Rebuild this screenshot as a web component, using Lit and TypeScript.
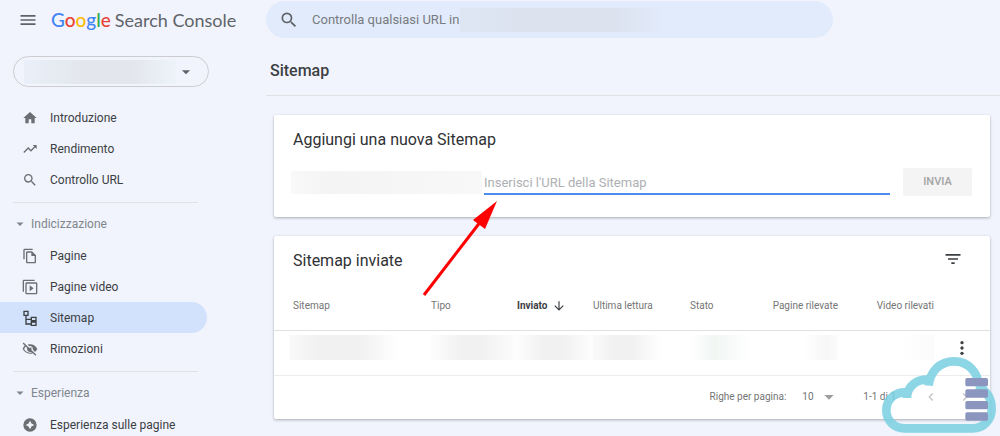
import { LitElement, html, css, svg } from "lit";
import { customElement, property } from "lit/decorators.js";
import { classMap } from "lit/directives/class-map.js";

const icons: Record<string, unknown> = {
  menu: svg`<path d="M3 18h18v-2H3v2zm0-5h18v-2H3v2zm0-7v2h18V6H3z"/>`,
  home: svg`<path d="M10 20v-6h4v6h5v-8h3L12 3 2 12h3v8z"/>`,
  trend: svg`<path d="M16 6l2.29 2.29-4.88 4.88-4-4L2 16.59 3.41 18l6-6 4 4 6.3-6.29L22 12V6z"/>`,
  search: svg`<path d="M15.5 14h-.79l-.28-.27A6.47 6.47 0 0 0 16 9.5 6.5 6.5 0 1 0 9.5 16c1.61 0 3.09-.59 4.23-1.57l.27.28v.79l5 4.99L20.49 19l-4.99-5zm-6 0C7.01 14 5 11.99 5 9.5S7.01 5 9.5 5 14 7.01 14 9.5 11.99 14 9.5 14z"/>`,
  pages: svg`<path d="M16 1H4c-1.1 0-2 .9-2 2v14h2V3h12V1zm-1 4H8c-1.1 0-1.99.9-1.99 2L6 21c0 1.1.89 2 1.99 2H19c1.1 0 2-.9 2-2V11l-6-6zM8 21V7h6v5h5v9H8z"/>`,
  video: svg`<path d="M3 19H1V3c0-1.100.9-2 2-2h16v2H3v16zM21 5H7c-1.100 0-2 .9-2 2v14c0 1.100.9 2 2 2h14c1.100 0 2-.9 2-2V7c0-1.100-.9-2-2-2zm0 16H7V7h14v14zM11.500 9.500v9l6-4.500z"/>`,
  sitemap: svg`<path d="M2 1h8v8H7v4h6v-3h9v7h-9v-2H7v5h6v-3h9v7h-9v-2H5V9H2V1zm2 2v4h4V3H4zm11 9v3h5v-3h-5zm0 7v3h5v-3h-5z"/>`,
  hidden: svg`<path fill-rule="evenodd" d="M12 5c5 0 9 3 11 7-.8 1.700-2 3.200-3.500 4.400l-3.200-3.200c.5-3.300-2-6-5.400-5.500L8.500 5.500C9.600 5.200 10.800 5 12 5zM2.400 2.300 1 3.700l3.100 3.100C2.700 8.200 1.700 9.900 1 12c2 4 6 7 11 7 1.600 0 3-.3 4.300-.8l3.800 3.800 1.400-1.400L2.400 2.300zM5.600 8.200l2 2c-1 3.600 2.500 7.200 6.200 6.200l1 1C10.400 18.600 5.400 16.500 3.200 12c.6-1.500 1.400-2.800 2.400-3.800zM12 9c1.700 0 3 1.300 3 3l-3-3z"/><circle cx="11.800" cy="12.500" r="2.200"/>`,
  experience: svg`<path fill-rule="evenodd" d="M12 2a10 10 0 1 0 0 20 10 10 0 0 0 0-20zm0 3.500 2.200 4.300 4.300 2.200-4.300 2.200L12 18.500l-2.200-4.300L5.500 12l4.300-2.200z"/>`,
  caret: svg`<path d="M5 9l7 7 7-7z"/>`,
  filter: svg`<path d="M10 18h4v-2h-4v2zM3 6v2h18V6H3zm3 7h12v-2H6v2z"/>`,
  down: svg`<path d="M20 12l-1.410-1.410L13 16.170V4h-2v12.170l-5.580-5.590L4 12l8 8z"/>`,
  more: svg`<circle cx="12" cy="4" r="2.500"/><circle cx="12" cy="12" r="2.500"/><circle cx="12" cy="20" r="2.500"/>`,
  prev: svg`<path d="M15.410 7.410 14 6l-6 6 6 6 1.410-1.410L10.830 12z"/>`,
  next: svg`<path d="M10 6 8.590 7.410 13.170 12l-4.580 4.590L10 18l6-6z"/>`,
};

@customElement("ui-icon")
class UiIcon extends LitElement {
  @property() name = "";
  static styles = css`
    :host { display: inline-flex; width: 16px; height: 16px; flex: none; }
    svg { width: 100%; height: 100%; fill: currentColor; }
  `;
  render() {
    return html`<svg viewBox="0 0 24 24" aria-hidden="true">${icons[this.name]}</svg>`;
  }
}

interface Item { label: string; icon: string; active?: boolean }
interface Section { title?: string; items: Item[] }

const sections: Section[] = [
  { items: [
    { label: "Introduzione", icon: "home" },
    { label: "Rendimento", icon: "trend" },
    { label: "Controllo URL", icon: "search" },
  ] },
  { title: "Indicizzazione", items: [
    { label: "Pagine", icon: "pages" },
    { label: "Pagine video", icon: "video" },
    { label: "Sitemap", icon: "sitemap", active: true },
    { label: "Rimozioni", icon: "hidden" },
  ] },
  { title: "Esperienza", items: [{ label: "Esperienza sulle pagine", icon: "experience" }] },
];

@customElement("side-nav")
class SideNav extends LitElement {
  static styles = css`
    :host { display: block; overflow: hidden; }
    * { box-sizing: border-box; }
    button { font: inherit; border: 0; background: none; padding: 0; color: inherit; }
    .brand { display: flex; align-items: center; gap: 13px; height: 40px; padding-left: 18px; color: #5f6368; }
    .menu { display: flex; }
    .menu ui-icon { width: 20px; height: 20px; }
    .logo { display: flex; align-items: baseline; gap: 4px; text-decoration: none; color: #5f6368; font: 18px/24px Lato, sans-serif; white-space: nowrap; }
    .google { font: 500 19px/24px Lato, sans-serif; }
    .b { color: #4285f4; } .r { color: #ea4335; } .y { color: #fbbc05; } .g { color: #34a853; }
    .property { display: flex; align-items: center; justify-content: space-between; width: 196px; height: 31px; margin: 16px 0 15px 13px; padding: 0 15px 0 10px; border: 1px solid #cbcdd1; border-radius: 16px; color: #5f6368; }
    .mask { width: 152px; height: 24px; background: linear-gradient(90deg, #eaf0f9, #e3e6ec 40%, #e3e6ec 70%, #eef2fa); }
    .caret { width: 14px; height: 14px; }
    .item { display: flex; align-items: center; gap: 12px; height: 31px; margin-right: 59px; padding-left: 22px; border-radius: 0 16px 16px 0; color: #3c4043; text-decoration: none; white-space: nowrap; }
    .item ui-icon { color: #6b6e72; }
    .active { background: #d3e2fc; }
    .active ui-icon { color: #3c4043; }
    .group { margin-top: 7px; }
    .rule { height: 1px; margin: 0 68px 0 13px; background: #e0e2e6; }
    .heading { display: flex; align-items: center; gap: 5px; height: 37px; padding: 4px 0 0 14px; color: #80868b; }
    .heading ui-icon { width: 12px; height: 12px; }
  `;
  item(i: Item) {
    return html`<a href="#" class=${classMap({ item: true, active: !!i.active })}><ui-icon name=${i.icon}></ui-icon>${i.label}</a>`;
  }
  render() {
    return html`
      <div class="brand">
        <button class="menu" aria-label="Menu"><ui-icon name="menu"></ui-icon></button>
        <a class="logo" href="#"><span class="google"><span class="b">G</span><span class="r">o</span><span class="y">o</span><span class="b">g</span><span class="g">l</span><span class="r">e</span></span><span>Search Console</span></a>
      </div>
      <button class="property" aria-label="Proprietà"><span class="mask"></span><ui-icon class="caret" name="caret"></ui-icon></button>
      <nav>
        ${sections.map((s) => s.title
          ? html`<div class="group"><div class="rule"></div><button class="heading"><ui-icon name="caret"></ui-icon>${s.title}</button>${s.items.map((i) => this.item(i))}</div>`
          : s.items.map((i) => this.item(i)))}
      </nav>`;
  }
}

@customElement("app-root")
class AppRoot extends LitElement {
  static styles = css`
    :host { display: grid; grid-template-columns: 266px 1fr; height: 100vh; overflow: hidden; position: relative; background: #f1f4fd; color: #3c4043; font: 12px/16px Roboto, sans-serif; }
    * { box-sizing: border-box; }
    button, input, select { font: inherit; color: inherit; border: 0; background: none; padding: 0; margin: 0; outline: 0; }
    main { min-width: 0; }
    .search { display: flex; align-items: center; width: 567px; max-width: 90%; height: 37px; margin-top: 1px; padding-left: 13px; border-radius: 19px; background: #e2ebfb; color: #5f6368; }
    .search ui-icon { width: 20px; height: 20px; }
    .search input { width: 148px; margin-left: 13px; font-size: 13px; }
    .search input::placeholder { color: #777b80; opacity: 1; }
    .search-mask { width: 204px; height: 24px; background: linear-gradient(90deg, #dee6f4, #dce3ef 30%, #dce2ee 75%, #e2ebfb); }
    h1 { margin: 0; height: 58px; padding: 23px 0 0 4px; border-bottom: 1px solid #dfe1e5; font: 500 16px/20px Roboto, sans-serif; }
    h2 { margin: 0; font: 400 16px/24px Roboto, sans-serif; color: #303134; }
    .card { margin: 19px 10px 0 8px; background: #fff; border-radius: 2px; box-shadow: 0 1px 3px rgba(60, 64, 67, .4); }
    .add { padding: 13px 18px 21px 17px; }
    .add h2 { padding-left: 2px; }
    .row { display: flex; align-items: flex-end; margin-top: 16px; }
    .url-mask { width: 191px; height: 23px; margin: 0 2px 2px 0; background: linear-gradient(90deg, #f9f9fa, #f4f4f5 20%, #f8f8f9); }
    .url { flex: 1; min-width: 0; height: 24px; margin-bottom: 1px; border-bottom: 2px solid #4d8df0; font-size: 13px; }
    .url::placeholder { color: #aeb0b3; opacity: 1; }
    .send { width: 69px; height: 28px; margin-left: 13px; border-radius: 2px; background: #f4f4f4; color: #a3a3a3; font-size: 11px; font-weight: 500; }
    .top { display: flex; align-items: center; justify-content: space-between; padding: 13px 27px 0 19px; }
    .icon { display: flex; margin-top: -4px; }
    .icon ui-icon { width: 20px; height: 20px; }
    table { width: 100%; border-collapse: collapse; table-layout: fixed; }
    th { height: 57px; padding: 26px 0 16px; text-align: left; font-size: 10px; line-height: 14px; font-weight: 400; color: #757575; white-space: nowrap; border-bottom: 1px solid #e0e0e0; }
    th:first-child { padding-left: 19px; }
    .sorted { color: #3c4043; font-weight: 700; }
    .sorted span { display: inline-flex; align-items: center; gap: 4px; height: 14px; }
    .sorted ui-icon { width: 14px; height: 14px; }
    .num { text-align: right; }
    td { height: 45px; padding: 0; border-bottom: 1px solid #ececec; }
    td:first-child { padding-left: 15px; }
    td:last-child { padding-left: 20px; }
    .smudge { height: 25px; margin-bottom: 10px; background: linear-gradient(90deg, #fdfdfd, #f1f1f1 35%, #f1f1f1 60%, #fdfdfd); }
    .first { width: 110px; background: linear-gradient(90deg, #fafafa, #f1f1f1 25%, #f1f1f1 65%, #fff); }
    .read { background: linear-gradient(90deg, #fafafa, #f1f1f1 20%, #f1f1f1 40%, #fff 70%); }
    .ok { background: linear-gradient(90deg, #fff, #f1f6f3 35%, #fff 85%); }
    .faint { background: linear-gradient(90deg, #fff 55%, #f7f7f7 85%, #fcfcfc); }
    .bare { background: linear-gradient(90deg, #fff 60%, #fbfbfb); }
    .c2 { width: 86px; } .c3 { width: 76px; } .c4 { width: 97px; } .c5 { width: 70px; } .c6 { width: 78px; } .c7 { width: 96px; } .c8 { width: 56px; }
    .more { display: flex; margin-bottom: 10px; }
    .pager { display: flex; align-items: center; justify-content: flex-end; height: 43px; padding-right: 17px; font-size: 10px; color: #757575; }
    .size { display: flex; align-items: center; margin: 0 26px 0 16px; }
    .size select { appearance: none; width: 19px; }
    .size ui-icon { color: #9e9e9e; }
    .pager button { display: flex; color: #c4c4c4; }
    .prev { margin: 0 18px 0 27px; }
    .arrow { position: absolute; left: 420px; top: 198px; width: 80px; height: 102px; pointer-events: none; }
    .cloud { position: absolute; right: 0; bottom: 0; width: 140px; height: 96px; pointer-events: none; }
  `;
  render() {
    return html`
      <side-nav></side-nav>
      <main>
        <label class="search"><ui-icon name="search"></ui-icon><input type="text" aria-label="Controlla URL" placeholder="Controlla qualsiasi URL in" /><span class="search-mask"></span></label>
        <h1>Sitemap</h1>
        <section class="card add">
          <h2>Aggiungi una nuova Sitemap</h2>
          <form class="row">
            <span class="url-mask"></span>
            <input class="url" type="text" aria-label="URL della Sitemap" placeholder="Inserisci l'URL della Sitemap" />
            <button class="send" type="button" disabled>INVIA</button>
          </form>
        </section>
        <section class="card">
          <div class="top"><h2>Sitemap inviate</h2><button class="icon" aria-label="Filtra"><ui-icon name="filter"></ui-icon></button></div>
          <table>
            <colgroup><col /><col class="c2" /><col class="c3" /><col class="c4" /><col class="c5" /><col class="c6" /><col class="c7" /><col class="c8" /></colgroup>
            <thead><tr>
              <th>Sitemap</th><th>Tipo</th>
              <th class="sorted" aria-sort="descending"><span>Inviato<ui-icon name="down"></ui-icon></span></th>
              <th>Ultima lettura</th><th>Stato</th><th class="num">Pagine rilevate</th><th class="num">Video rilevati</th><th></th>
            </tr></thead>
            <tbody><tr>
              <td><div class="smudge first"></div></td>
              <td><div class="smudge"></div></td>
              <td><div class="smudge"></div></td>
              <td><div class="smudge read"></div></td>
              <td><div class="smudge ok"></div></td>
              <td><div class="smudge faint"></div></td>
              <td><div class="smudge bare"></div></td>
              <td><button class="more" aria-label="Altro"><ui-icon name="more"></ui-icon></button></td>
            </tr></tbody>
          </table>
          <div class="pager">
            <label for="rows">Righe per pagina:</label>
            <span class="size"><select id="rows"><option>10</option></select><ui-icon name="caret"></ui-icon></span>
            <span>1-1 di 1</span>
            <button class="prev" aria-label="Precedente"><ui-icon name="prev"></ui-icon></button>
            <button aria-label="Successiva"><ui-icon name="next"></ui-icon></button>
          </div>
        </section>
      </main>
      <svg class="arrow" viewBox="0 0 80 102" aria-hidden="true"><path d="M4 97 61 23" stroke="#f00" stroke-width="3"/><path d="M77 3 53 22 65 31z" fill="#f00"/></svg>
      <svg class="cloud" viewBox="0 0 420 288" aria-hidden="true">
        <g fill="none" stroke="#7bd0e2" stroke-width="26" opacity=".86">
          <path d="M154 160C112 148 79 175 79 211C79 241 102 265 134 265H338C370 265 395 241 395 207C395 173 380 151 350 138"/>
          <path d="M141 174C141 138 172 114 213 120"/>
          <path d="M206 137C210 94 240 64 282 64C326 64 352 96 358 138"/>
        </g>
        <g fill="#8b95bd"><rect x="316" y="114" width="68" height="25" rx="5"/><rect x="316" y="148" width="68" height="25" rx="5"/><rect x="316" y="183" width="68" height="25" rx="5"/><rect x="316" y="217" width="68" height="25" rx="5"/></g>
      </svg>`;
  }
}
